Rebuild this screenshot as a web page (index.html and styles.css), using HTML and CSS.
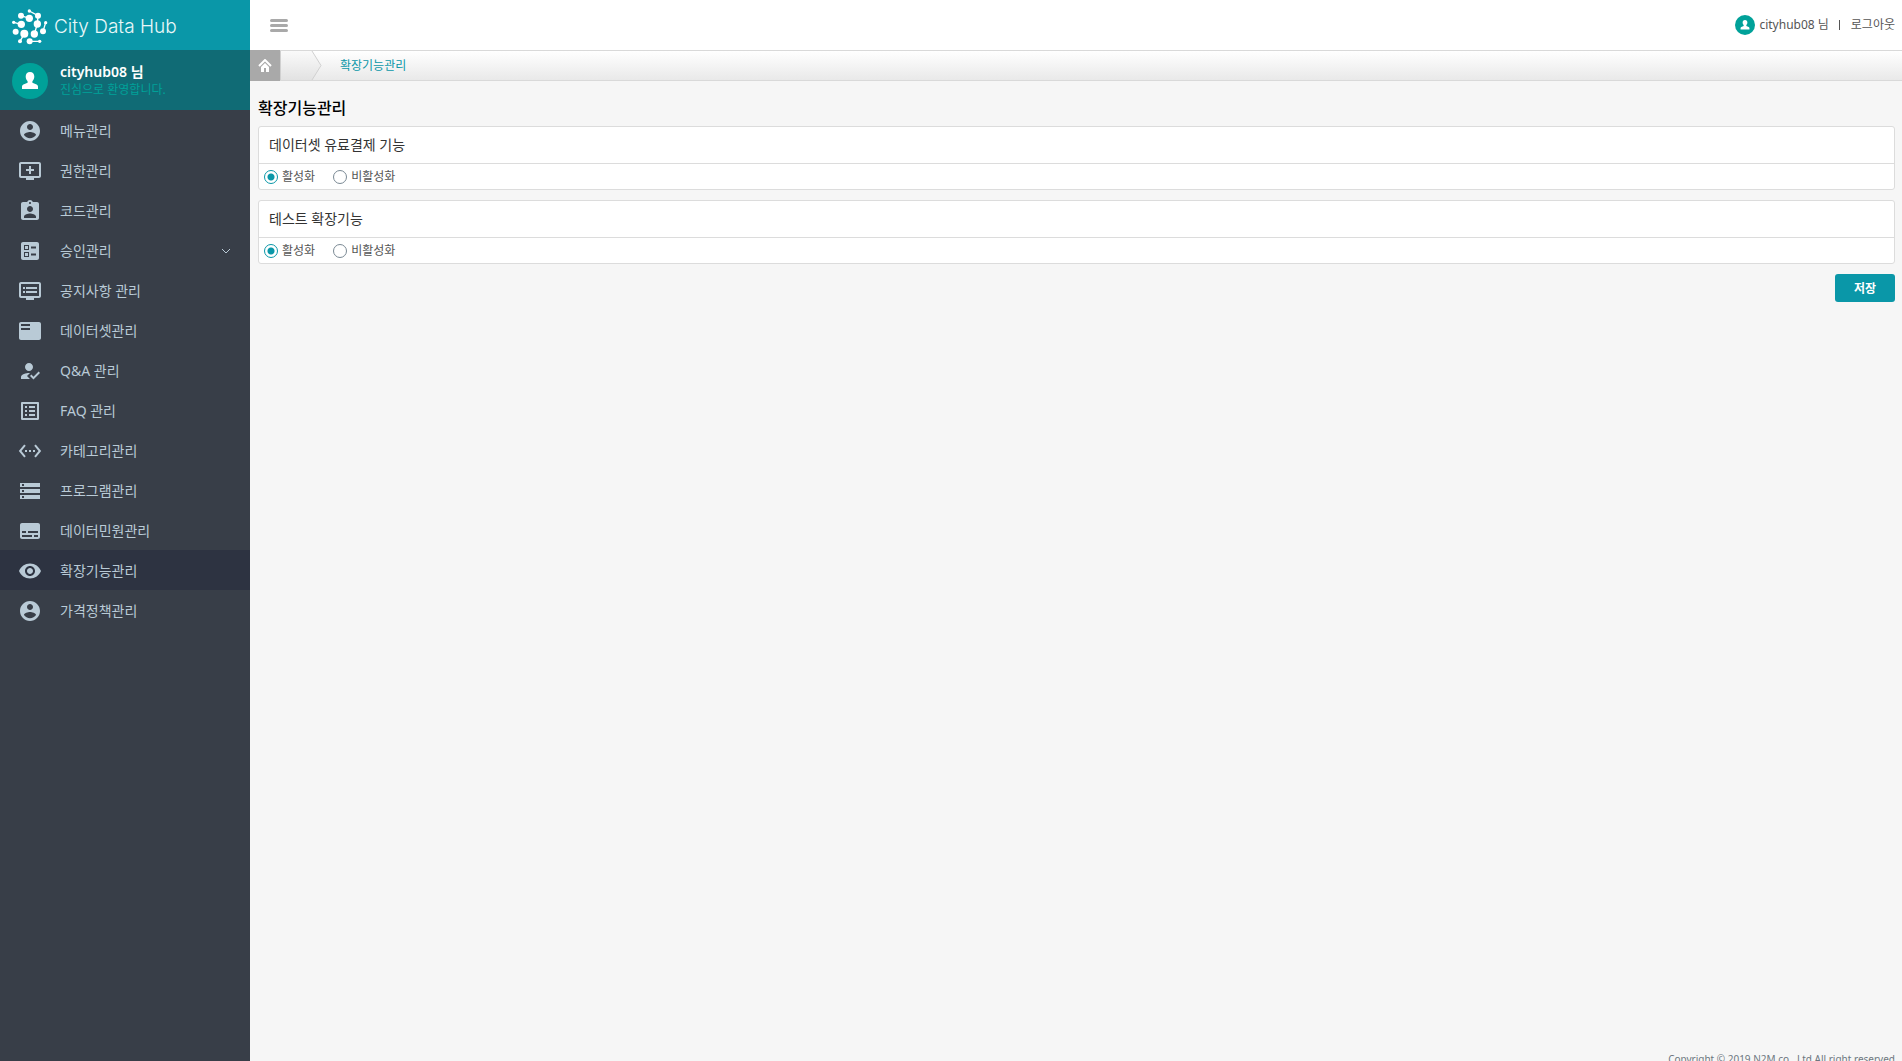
FILE: index.html
```html
<!DOCTYPE html>
<html lang="ko">
<head>
    <meta charset="UTF-8">
    <title>City Data Hub</title>
    <link rel="stylesheet" href="styles.css">
</head>
<body>
<div class="wrap">
    <aside class="side">
        <h1 class="logo">
            <a href="#">
                <svg class="logo-mark" viewBox="36 26 108 108">
                    <path d="M88 32L114 46L112 71L103 101M63 46L88 54M41 66L64 72M137 67L129 93M73 100L60 123M89 123H119" fill="none" stroke="#fff" stroke-width="4"/>
                    <g fill="#fff">
                        <circle cx="88" cy="32" r="5"/>
                        <circle cx="114" cy="46" r="9"/>
                        <circle cx="88" cy="54" r="11"/>
                        <circle cx="63" cy="46" r="9"/>
                        <circle cx="41" cy="66" r="5"/>
                        <circle cx="64" cy="72" r="11"/>
                        <circle cx="112" cy="71" r="11"/>
                        <circle cx="137" cy="67" r="5"/>
                        <circle cx="129" cy="93" r="9"/>
                        <circle cx="103" cy="101" r="11"/>
                        <circle cx="47" cy="94" r="9"/>
                        <circle cx="73" cy="100" r="12"/>
                        <circle cx="60" cy="123" r="6"/>
                        <circle cx="89" cy="123" r="9"/>
                        <circle cx="119" cy="123" r="5"/>
                    </g>
                </svg>
                <span>City Data Hub</span>
            </a>
        </h1>
        <div class="profile">
            <svg class="avatar" viewBox="0 0 36 36">
                <circle cx="18" cy="18" r="18" fill="#00a199"/>
                <path d="M18 9c2.800 0 4.300 2 4.300 4.600 0 2-.9 3.700-1.900 4.600v1.600l4.200 1.700c1 .5 1.400 1.200 1.400 2.300V26H10v-2.200c0-1.100.4-1.800 1.400-2.300l4.200-1.700v-1.600c-1-.9-1.900-2.600-1.900-4.600C13.700 11 15.200 9 18 9z" fill="#fff"/>
            </svg>
            <div>
                <strong>cityhub08 님</strong>
                <p>진심으로 환영합니다.</p>
            </div>
        </div>
        <nav>
            <ul class="menu">
                <li><a href="#"><svg viewBox="0 0 24 24"><path d="M12 2C6.480 2 2 6.480 2 12s4.480 10 10 10 10-4.480 10-10S17.520 2 12 2zm0 3c1.660 0 3 1.340 3 3s-1.340 3-3 3-3-1.340-3-3 1.340-3 3-3zm0 14.200c-2.500 0-4.710-1.280-6-3.220.03-1.990 4-3.080 6-3.080 1.990 0 5.970 1.090 6 3.080-1.290 1.940-3.500 3.220-6 3.220z"/></svg>메뉴관리</a></li>
                <li><a href="#"><svg viewBox="0 0 24 24"><path d="M21 3H3c-1.110 0-2 .89-2 2v12c0 1.100.89 2 2 2h5v2h8v-2h5c1.100 0 1.990-.9 1.990-2L23 5c0-1.110-.9-2-2-2zm0 14H3V5h18v12zm-5-7v2h-3v3h-2v-3H8v-2h3V7h2v3h3z"/></svg>권한관리</a></li>
                <li><a href="#"><svg viewBox="0 0 24 24"><path d="M19 3h-4.180C14.400 1.840 13.300 1 12 1c-1.300 0-2.400.84-2.820 2H5c-1.100 0-2 .9-2 2v14c0 1.100.9 2 2 2h14c1.100 0 2-.9 2-2V5c0-1.100-.9-2-2-2zm-7 0c.55 0 1 .45 1 1s-.45 1-1 1-1-.45-1-1 .45-1 1-1zm0 4c1.660 0 3 1.340 3 3s-1.340 3-3 3-3-1.340-3-3 1.340-3 3-3zm6 12H6v-1.400c0-2 4-3.100 6-3.100s6 1.100 6 3.100V19z"/></svg>코드관리</a></li>
                <li><a href="#"><svg viewBox="0 0 24 24"><path d="M13 9.500h5v-2h-5v2zm0 7h5v-2h-5v2zm6 4.500H5c-1.100 0-2-.9-2-2V5c0-1.100.9-2 2-2h14c1.100 0 2 .9 2 2v14c0 1.100-.9 2-2 2zM6 11h5V6H6v5zm1-4h3v3H7V7zM6 18h5v-5H6v5zm1-4h3v3H7v-3z"/></svg>승인관리<svg class="arrow" viewBox="0 0 10 10"><path d="M1 3l4 4 4-4" fill="none" stroke="#b9cad6" stroke-width="1"/></svg></a></li>
                <li><a href="#"><svg viewBox="0 0 24 24"><path d="M21 3H3c-1.100 0-2 .9-2 2v12c0 1.100.9 2 2 2h5v2h8v-2h5c1.100 0 1.990-.9 1.990-2L23 5c0-1.100-.9-2-2-2zm0 14H3V5h18v12zm-2-9H8v2h11V8zm0 4H8v2h11v-2zM7 8H5v2h2V8zm0 4H5v2h2v-2z"/></svg>공지사항 관리</a></li>
                <li><a href="#"><svg viewBox="0 0 24 24"><path d="M21 3H3c-1.100 0-2 .9-2 2v14c0 1.100.9 2 2 2h18c1.100 0 2-.9 2-2V5c0-1.100-.9-2-2-2zm-9 8H3V9h9v2zm0-4H3V5h9v2z"/></svg>데이터셋관리</a></li>
                <li><a href="#"><svg viewBox="0 0 24 24"><path d="M9 17l3-2.940c-.39-.04-.68-.06-1-.06-2.670 0-8 1.340-8 4v2h9l-3-3zm2-5c2.210 0 4-1.790 4-4s-1.790-4-4-4-4 1.790-4 4 1.790 4 4 4zm4.470 8.500L12 17l1.400-1.410 2.070 2.080 5.130-5.170 1.400 1.410z"/></svg>Q&amp;A 관리</a></li>
                <li><a href="#"><svg viewBox="0 0 24 24"><path d="M19 5v14H5V5h14m1.100-2H3.900c-.5 0-.9.400-.9.900v16.200c0 .4.400.9.900.9h16.200c.4 0 .9-.5.900-.9V3.900c0-.5-.5-.9-.9-.9zM11 7h6v2h-6V7zm0 4h6v2h-6v-2zm0 4h6v2h-6v-2zM7 7h2v2H7V7zm0 4h2v2H7v-2zm0 4h2v2H7v-2z"/></svg>FAQ 관리</a></li>
                <li><a href="#"><svg viewBox="0 0 24 24"><path d="M7.770 6.760L6.230 5.480.82 12l5.410 6.520 1.540-1.280L3.420 12l4.350-5.240zM7 13h2v-2H7v2zm10-2h-2v2h2v-2zm-6 2h2v-2h-2v2zm6.770-7.520l-1.540 1.280L20.580 12l-4.350 5.240 1.540 1.280L23.180 12l-5.410-6.520z"/></svg>카테고리관리</a></li>
                <li><a href="#"><svg viewBox="0 0 24 24"><path d="M2 20h20v-4H2v4zm2-3h2v2H4v-2zM2 4v4h20V4H2zm4 3H4V5h2v2zm-4 7h20v-4H2v4zm2-3h2v2H4v-2z"/></svg>프로그램관리</a></li>
                <li><a href="#"><svg viewBox="0 0 24 24"><path d="M20 4H4c-1.100 0-2 .9-2 2v12c0 1.100.9 2 2 2h16c1.100 0 2-.9 2-2V6c0-1.100-.9-2-2-2zM4 12h4v2H4v-2zm10 6H4v-2h10v2zm6 0h-4v-2h4v2zm0-4H10v-2h10v2z"/></svg>데이터민원관리</a></li>
                <li class="select"><a href="#"><svg viewBox="0 0 24 24"><path d="M12 4.500C7 4.500 2.730 7.610 1 12c1.730 4.390 6 7.500 11 7.500s9.270-3.110 11-7.500c-1.730-4.390-6-7.500-11-7.500zM12 17c-2.760 0-5-2.240-5-5s2.240-5 5-5 5 2.240 5 5-2.240 5-5 5zm0-8c-1.660 0-3 1.340-3 3s1.340 3 3 3 3-1.340 3-3-1.340-3-3-3z"/></svg>확장기능관리</a></li>
                <li><a href="#"><svg viewBox="0 0 24 24"><path d="M12 2C6.480 2 2 6.480 2 12s4.480 10 10 10 10-4.480 10-10S17.520 2 12 2zm0 3c1.660 0 3 1.340 3 3s-1.340 3-3 3-3-1.340-3-3 1.340-3 3-3zm0 14.200c-2.500 0-4.710-1.280-6-3.220.03-1.990 4-3.080 6-3.080 1.990 0 5.970 1.090 6 3.080-1.290 1.940-3.500 3.220-6 3.220z"/></svg>가격정책관리</a></li>
            </ul>
        </nav>
    </aside>
    <div class="page">
        <header class="top">
            <button type="button" class="toggle" aria-label="메뉴">
                <svg viewBox="0 0 18 13"><path d="M1.500 1.500h15M1.500 6.500h15M1.500 11.500h15" stroke="#a9a9a9" stroke-width="3" stroke-linecap="round"/></svg>
            </button>
            <div class="user">
                <svg viewBox="0 0 36 36">
                    <circle cx="18" cy="18" r="18" fill="#00a199"/>
                    <path d="M18 9c2.800 0 4.300 2 4.300 4.600 0 2-.9 3.700-1.900 4.600v1.600l4.200 1.700c1 .5 1.400 1.200 1.400 2.300V26H10v-2.200c0-1.100.4-1.800 1.400-2.300l4.200-1.700v-1.600c-1-.9-1.900-2.600-1.900-4.600C13.700 11 15.200 9 18 9z" fill="#fff"/>
                </svg>
                <span>cityhub08 님</span>
                <i class="bar"></i>
                <a href="#">로그아웃</a>
            </div>
        </header>
        <div class="crumb">
            <a href="#" class="home" aria-label="홈">
                <svg viewBox="0 0 14 13"><path d="M1 7l6-6 6 6" fill="none" stroke="#fff" stroke-width="2"/><path d="M7 4l4 4v5H8V9H6v4H3V8z" fill="#fff"/></svg>
            </a>
            <svg class="step" viewBox="0 0 42 29">
                <defs>
                    <linearGradient id="step" x1="0" y1="0" x2="0" y2="1">
                        <stop offset="0" stop-color="#fafafa"/>
                        <stop offset="1" stop-color="#e2e2e2"/>
                    </linearGradient>
                </defs>
                <path d="M0 0H32L41 14.500L32 29H0z" fill="url(#step)"/>
                <path d="M.5 0V29M32 0L41 14.500L32 29" fill="none" stroke="#d0d0d0"/>
            </svg>
            <a href="#" class="here">확장기능관리</a>
        </div>
        <main>
            <h2>확장기능관리</h2>
            <form>
                <section class="card">
                    <h3>데이터셋 유료결제 기능</h3>
                    <div class="radios">
                        <label><input type="radio" name="pay" checked>활성화</label>
                        <label><input type="radio" name="pay">비활성화</label>
                    </div>
                </section>
                <section class="card">
                    <h3>테스트 확장기능</h3>
                    <div class="radios">
                        <label><input type="radio" name="test" checked>활성화</label>
                        <label><input type="radio" name="test">비활성화</label>
                    </div>
                </section>
                <div class="btns">
                    <button type="button" class="save">저장</button>
                </div>
            </form>
        </main>
        <footer>Copyright © 2019 N2M co., Ltd All right reserved</footer>
    </div>
</div>
</body>
</html>
```

FILE: styles.css
```css
* {
    margin: 0;
    padding: 0;
    box-sizing: border-box;
}

body {
    font-family: "Noto Sans", "Noto Sans CJK KR", sans-serif;
    font-size: 12px;
    line-height: 16px;
    color: #555;
    background: #f6f6f6;
    overflow: hidden;
}

a {
    color: inherit;
    text-decoration: none;
}

ul {
    list-style: none;
}

svg {
    display: block;
    flex: none;
}

/* the footer line runs a little below the window */
.wrap {
    display: flex;
    min-height: calc(100vh + 8px);
}

/* sidebar */
.side {
    flex: none;
    width: 250px;
    background: #383e48;
}

.logo {
    height: 50px;
    background: #0a97a8;
}

.logo a {
    display: flex;
    align-items: center;
    gap: 6px;
    height: 100%;
    padding: 4px 12px 0;
    color: #e9f7f8;
    font-family: Inter, sans-serif;
    font-size: 19px;
    font-weight: 300;
}

.logo-mark {
    width: 36px;
    height: 36px;
}

.profile {
    display: flex;
    align-items: center;
    gap: 12px;
    height: 60px;
    padding: 2px 12px 0;
    background: #106b75;
}

.avatar {
    width: 36px;
    height: 36px;
}

.profile strong {
    display: block;
    line-height: 18px;
    font-size: 14px;
    font-weight: 600;
    color: #fff;
}

.profile p {
    line-height: 18px;
    color: #00a199;
}

.menu a {
    display: flex;
    align-items: center;
    gap: 18px;
    height: 40px;
    padding: 2px 19px 0 18px;
    font-size: 14px;
    color: #b9cad6;
}

.menu svg {
    width: 24px;
    height: 24px;
    fill: #b9cad6;
}

.menu .arrow {
    width: 10px;
    height: 10px;
    margin-left: auto;
}

.menu .select {
    background: #2d3341;
}

/* top bar */
.page {
    flex: 1;
    min-width: 0;
    display: flex;
    flex-direction: column;
}

.top {
    display: flex;
    align-items: center;
    justify-content: space-between;
    height: 50px;
    padding: 0 7px 0 20px;
    background: #fff;
}

.toggle {
    border: 0;
    background: none;
    cursor: pointer;
}

.toggle svg {
    width: 18px;
    height: 13px;
}

.user {
    display: flex;
    align-items: center;
    line-height: 18px;
}

.user svg {
    width: 20px;
    height: 20px;
    margin-right: 4px;
}

.bar {
    width: 1px;
    height: 10px;
    margin: 0 11px 0 10px;
    background: #555;
}

/* breadcrumb */
.crumb {
    display: flex;
    align-items: center;
    height: 31px;
    border-top: 1px solid #d9d9d9;
    border-bottom: 1px solid #d9d9d9;
    background: linear-gradient(#fff, #e9e9e9);
}

.home {
    display: flex;
    align-items: center;
    justify-content: center;
    width: 30px;
    height: 31px;
    margin: -1px 0;
    background: #a9a9a9;
}

.home svg {
    width: 14px;
    height: 13px;
}

.step {
    width: 42px;
    height: 29px;
}

.here {
    margin-left: 18px;
    color: #0a97a8;
}

/* content */
main {
    flex: 1;
    padding: 16px 7px 0 8px;
}

h2 {
    margin-bottom: 7px;
    font-size: 16px;
    line-height: 22px;
    font-weight: 500;
    color: #000;
}

.card {
    margin-bottom: 10px;
    border: 1px solid #dcdcdc;
    border-radius: 3px;
    background: #fff;
}

h3 {
    padding: 0 10px;
    border-bottom: 1px solid #dcdcdc;
    font-size: 14px;
    line-height: 36px;
    font-weight: 400;
    color: #333;
}

.radios {
    display: flex;
    gap: 18px;
    padding: 0 5px;
}

.radios label {
    display: flex;
    align-items: center;
    gap: 4px;
    height: 25px;
    line-height: 18px;
    cursor: pointer;
}

.radios input {
    appearance: none;
    width: 14px;
    height: 14px;
    border: 1px solid #7a8994;
    border-radius: 50%;
}

.radios input:checked {
    border-color: #0a97a8;
    background: radial-gradient(circle, #0a97a8 3px, #fff 4px);
}

.btns {
    display: flex;
    justify-content: flex-end;
}

.save {
    width: 60px;
    height: 28px;
    border: 0;
    border-radius: 3px;
    background: #0a97a8;
    color: #fff;
    font: bold 12px "Noto Sans", "Noto Sans CJK KR", sans-serif;
    cursor: pointer;
}

footer {
    padding-right: 7px;
    font-size: 10px;
    line-height: 20px;
    text-align: right;
    color: #6d7680;
}
```
